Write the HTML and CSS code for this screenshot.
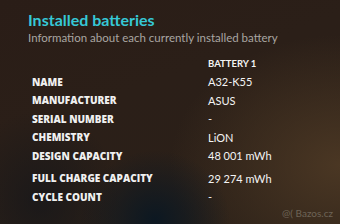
FILE: index.html
```html
<!DOCTYPE html>
<html>
<head>
<meta charset="utf-8">
<link rel="stylesheet" href="styles.css">
</head>
<body>
<div class="screen">
  <h1 class="title">Installed batteries</h1>
  <p class="subtitle">Information about each currently installed battery</p>
  <div class="table">
    <div class="row head"><span class="label"></span><span class="value">BATTERY 1</span></div>
    <div class="row"><span class="label">NAME</span><span class="value">A32-K55</span></div>
    <div class="row"><span class="label">MANUFACTURER</span><span class="value">ASUS</span></div>
    <div class="row"><span class="label">SERIAL NUMBER</span><span class="value">-</span></div>
    <div class="row"><span class="label">CHEMISTRY</span><span class="value">LiON</span></div>
    <div class="row"><span class="label">DESIGN CAPACITY</span><span class="value">48 001 mWh</span></div>
    <div class="row gap"><span class="label">FULL CHARGE CAPACITY</span><span class="value">29 274 mWh</span></div>
    <div class="row"><span class="label">CYCLE COUNT</span><span class="value">-</span></div>
  </div>
  <div class="watermark">@( Bazos.cz</div>
</div>
</body>
</html>
```
FILE: styles.css
```css
html, body {
  margin: 0;
  padding: 0;
}
body {
  width: 340px;
  height: 224px;
  overflow: hidden;
}
.screen {
  position: relative;
  width: 340px;
  height: 224px;
  box-sizing: border-box;
  padding: 10px 0 0 28px;
  font-family: "Lato", sans-serif;
  color: #f2f2f2;
  background:
    radial-gradient(ellipse 75px 70px at 155px 220px, rgba(12, 24, 34, 1), rgba(12, 24, 34, 0) 100%),
    radial-gradient(ellipse 80px 90px at 40px 200px, rgba(20, 22, 26, 0.7), rgba(20, 22, 26, 0) 100%),
    radial-gradient(ellipse 170px 130px at 340px 165px, rgba(76, 56, 36, 0.95), rgba(76, 56, 36, 0) 100%),
    linear-gradient(160deg, #2a1d17 0%, #2b1f18 40%, #2a2018 100%);
}
.title {
  margin: 0;
  font-size: 16px;
  line-height: 20px;
  font-weight: 700;
  color: #36c8d6;
}
.subtitle {
  margin: 0;
  font-size: 11.5px;
  line-height: 16px;
  color: #a9a6a2;
}
.table {
  margin-top: 8px;
  display: flex;
  flex-direction: column;
}
.row {
  display: grid;
  grid-template-columns: 180px auto;
  height: 18.5px;
  align-items: center;
}
.row.gap {
  margin-top: 4px;
}
.label {
  padding-left: 4px;
  font-family: "Open Sans", sans-serif;
  font-size: 10px;
  font-weight: 800;
  color: #f0f0f0;
}
.value {
  font-size: 11px;
  color: #f4f4f4;
}
.head .value {
  font-size: 9.5px;
  font-weight: 700;
}
.watermark {
  position: absolute;
  right: 7px;
  bottom: 5px;
  font-size: 10px;
  color: #6d6457;
}
```
